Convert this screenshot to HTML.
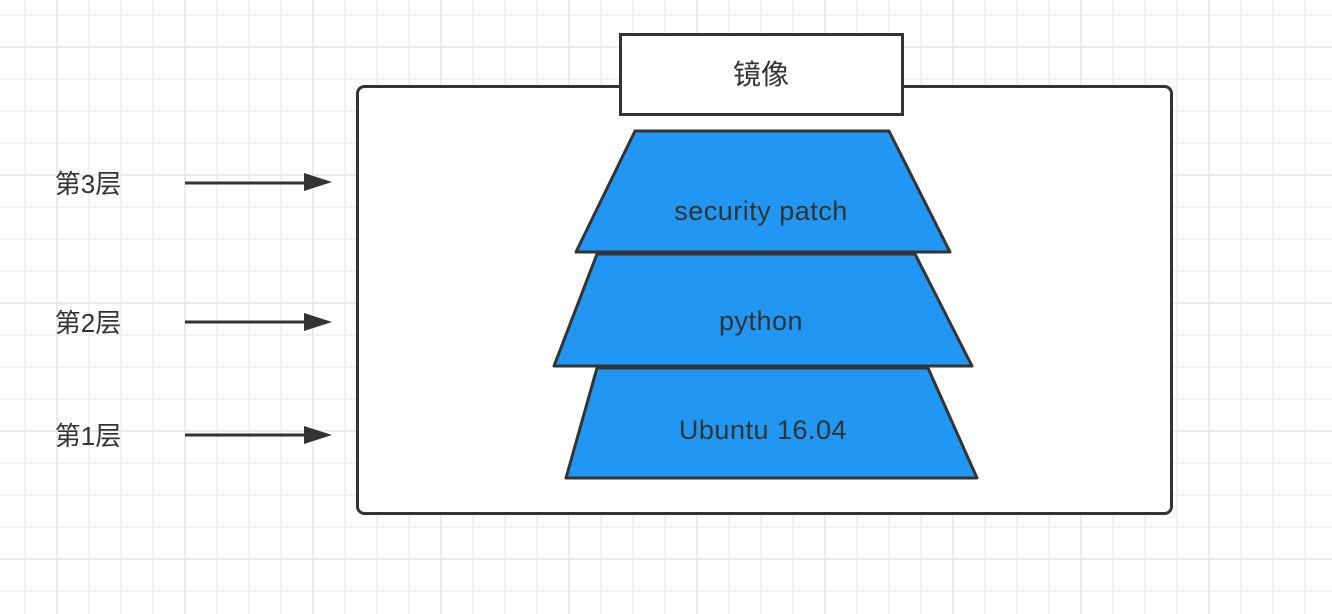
<!DOCTYPE html><html><head><meta charset="utf-8"><style>
html,body{margin:0;padding:0;background:#fff;}
body{width:1332px;height:614px;overflow:hidden;position:relative;
background-image:
linear-gradient(to right,#ebebeb 0 2px,transparent 2px),
linear-gradient(to bottom,#ebebeb 0 2px,transparent 2px),
linear-gradient(to right,#f1f1f1 0 2px,transparent 2px),
linear-gradient(to bottom,#f1f1f1 0 2px,transparent 2px);
background-size:128px 128px,128px 128px,32px 32px,32px 32px;
background-position:56px 0,0 46px,24px 0,0 14px;}
svg{position:absolute;left:0;top:0}
text{font-family:"Liberation Sans","Noto Sans CJK SC",sans-serif;fill:#333}
</style></head><body>
<svg width="1332" height="614">
<rect x="357.5" y="86.5" width="814" height="427" rx="7" fill="#fff" stroke="#333" stroke-width="3"/>
<rect x="620.5" y="34.5" width="282" height="80" fill="#fff" stroke="#333" stroke-width="3"/>
<text x="761" y="84" font-size="28" text-anchor="middle">镜像</text>
<polygon points="597,368 928,368 977,478 566,478" fill="#2196f2" stroke="#333" stroke-width="3" stroke-linejoin="round"/>
<polygon points="597,254 915,254 972,366 554,366" fill="#2196f2" stroke="#333" stroke-width="3" stroke-linejoin="round"/>
<polygon points="635,131 889,131 950,252 576,252" fill="#2196f2" stroke="#333" stroke-width="3" stroke-linejoin="round"/>
<text x="761" y="220" font-size="27" text-anchor="middle" letter-spacing="0.5">security patch</text>
<text x="761" y="330" font-size="27" text-anchor="middle" letter-spacing="0.5">python</text>
<text x="763" y="439" font-size="27" text-anchor="middle" letter-spacing="0.5">Ubuntu 16.04</text>
<g stroke="#333" stroke-width="3"><line x1="185" y1="183" x2="310" y2="183"/><line x1="185" y1="322" x2="310" y2="322"/><line x1="185" y1="435" x2="310" y2="435"/></g>
<g fill="#333"><polygon points="304,173 332,182 304,191"/><polygon points="304,313 332,322 304,331"/><polygon points="304,426 332,435 304,444"/></g>
<text x="88" y="193" font-size="26" text-anchor="middle">第3层</text>
<text x="88" y="332" font-size="26" text-anchor="middle">第2层</text>
<text x="88" y="445" font-size="26" text-anchor="middle">第1层</text>
</svg>
</body></html>
